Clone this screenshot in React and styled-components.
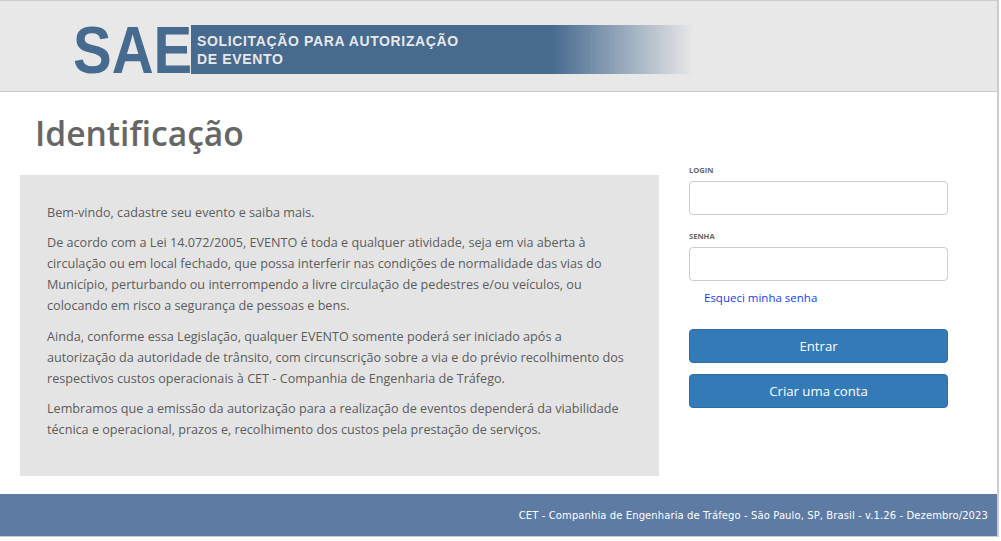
import { createGlobalStyle } from 'styled-components';
import styled from 'styled-components';

const GlobalStyle = createGlobalStyle`
  html, body {
    margin: 0;
    padding: 0;
    background: #fff;
  }
`;

const Page = styled.div`
  width: 999px;
  height: 537px;
  box-sizing: border-box;
  display: flex;
  flex-direction: column;
  border-top: 1px solid #ccc;
  border-right: 2px solid #ccc;
  border-bottom: 1px solid #ccc;
  font-family: 'Open Sans', sans-serif;
`;

const Header = styled.header`
  height: 91px;
  flex: none;
  box-sizing: border-box;
  display: flex;
  align-items: flex-start;
  padding: 24px 0 0 73px;
  background: #e8e8e8;
  border-bottom: 1px solid #ccc;
`;

const Logo = styled.div`
  width: 118px;
  font-family: 'Liberation Sans', sans-serif;
  font-weight: bold;
  font-size: 67px;
  line-height: 49px;
  height: 49px;
  color: #476a8f;
  transform: scaleX(0.865);
  transform-origin: left center;
`;

const Banner = styled.div`
  width: 508px;
  height: 49px;
  box-sizing: border-box;
  padding: 7px 0 0 6px;
  font-family: 'Liberation Sans', sans-serif;
  font-weight: bold;
  font-size: 14px;
  line-height: 18px;
  letter-spacing: 0.64px;
  color: #e8e8e8;
  background: linear-gradient(to right, #476a8f 0%, #476a8f 71%, #e8e8e8 99%);
`;

const Main = styled.main`
  flex: 1;
  display: grid;
  grid-template-columns: 639px 259px;
  column-gap: 30px;
  padding: 0 0 0 20px;
  align-content: start;
`;

const Title = styled.h1`
  grid-column: 1 / -1;
  margin: 0;
  padding: 18px 0 0 15px;
  height: 83px;
  box-sizing: border-box;
  font-size: 33.6px;
  line-height: 46px;
  font-weight: 600;
  color: #666;
`;

const InfoBox = styled.section`
  height: 301px;
  box-sizing: border-box;
  padding: 27px;
  background: #e4e4e4;
  color: #5c5c5c;
  font-size: 12.63px;
  font-weight: 500;
  line-height: 21px;
`;

const Paragraph = styled.p`
  margin: 0 0 9.4px;
`;

const LoginForm = styled.form`
  display: flex;
  flex-direction: column;
  margin-top: -11px;
`;

const FieldLabel = styled.label`
  display: block;
  font-size: 7.6px;
  font-weight: 700;
  line-height: 13px;
  color: #666;
  margin-bottom: 4px;
`;

const Input = styled.input`
  display: block;
  width: 100%;
  height: 34px;
  box-sizing: border-box;
  background: #fff;
  border: 1px solid #ccc;
  border-radius: 4px;
  margin-bottom: 15px;
`;

const ForgotLink = styled.a`
  font-size: 11.5px;
  font-weight: 500;
  line-height: 16px;
  color: #1540e8;
  margin: -6px 0 23px 15px;
`;

const Button = styled.button`
  height: 34px;
  box-sizing: border-box;
  margin-bottom: 11px;
  background: #337ab7;
  border: 1px solid #2e6da4;
  border-radius: 4px;
  color: #fff;
  font-family: 'Open Sans', sans-serif;
  font-size: 13.2px;
  font-weight: 500;
`;

const Footer = styled.footer`
  height: 42px;
  flex: none;
  box-sizing: border-box;
  display: flex;
  align-items: center;
  justify-content: flex-end;
  padding-right: 9px;
  background: #5d7ba3;
  color: #fff;
  font-family: 'DejaVu Sans', sans-serif;
  font-size: 10px;
  letter-spacing: 0.1px;
`;

export default function App() {
  return (
    <Page>
      <GlobalStyle />
      <Header>
        <Logo>SAE</Logo>
        <Banner>
          SOLICITAÇÃO PARA AUTORIZAÇÃO
          <br />
          DE EVENTO
        </Banner>
      </Header>
      <Main>
        <Title>Identificação</Title>
        <InfoBox>
          <Paragraph>Bem-vindo, cadastre seu evento e saiba mais.</Paragraph>
          <Paragraph>
            De acordo com a Lei 14.072/2005, EVENTO é toda e qualquer atividade, seja em via aberta à
            <br />
            circulação ou em local fechado, que possa interferir nas condições de normalidade das vias do
            <br />
            Município, perturbando ou interrompendo a livre circulação de pedestres e/ou veículos, ou
            <br />
            colocando em risco a segurança de pessoas e bens.
          </Paragraph>
          <Paragraph>
            Ainda, conforme essa Legislação, qualquer EVENTO somente poderá ser iniciado após a
            <br />
            autorização da autoridade de trânsito, com circunscrição sobre a via e do prévio recolhimento dos
            <br />
            respectivos custos operacionais à CET - Companhia de Engenharia de Tráfego.
          </Paragraph>
          <Paragraph>
            Lembramos que a emissão da autorização para a realização de eventos dependerá da viabilidade
            <br />
            técnica e operacional, prazos e, recolhimento dos custos pela prestação de serviços.
          </Paragraph>
        </InfoBox>
        <LoginForm>
          <FieldLabel htmlFor="login">LOGIN</FieldLabel>
          <Input id="login" type="text" />
          <FieldLabel htmlFor="senha">SENHA</FieldLabel>
          <Input id="senha" type="password" />
          <ForgotLink>Esqueci minha senha</ForgotLink>
          <Button type="button">Entrar</Button>
          <Button type="button">Criar uma conta</Button>
        </LoginForm>
      </Main>
      <Footer>CET - Companhia de Engenharia de Tráfego - São Paulo, SP, Brasil - v.1.26 - Dezembro/2023</Footer>
    </Page>
  );
}
